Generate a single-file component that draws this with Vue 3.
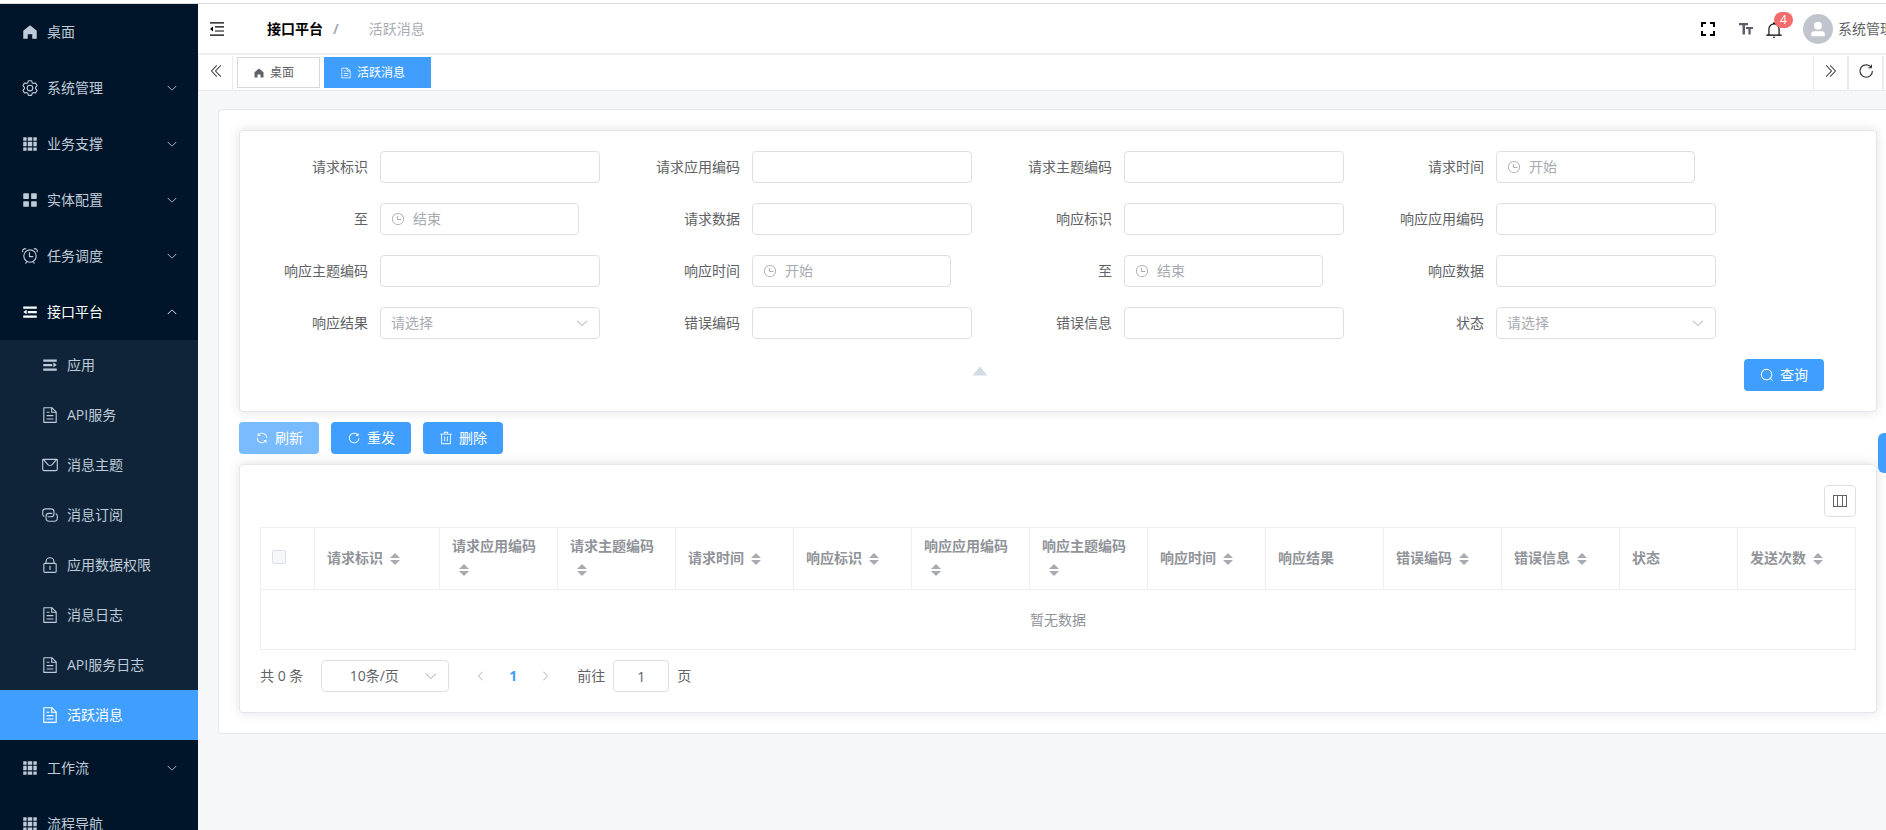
<script setup>
import { h, ref } from 'vue'

const paths = {
  home: 'M512 128 128 447.936V896h255.936V640H640v256h255.936V447.936z',
  grid: 'M640 384v256H384V384h256zm64 0h192v256H704V384zm-64 512H384V704h256v192zm64 0V704h192v192H704zm-64-768v192H384V128h256zm64 0h192v192H704V128zM320 384v256H128V384h192zm0 512H128V704h192v192zm0-768v192H128V128h192z',
  menu: 'M160 448a32 32 0 0 1-32-32V160.064a32 32 0 0 1 32-32h256a32 32 0 0 1 32 32V416a32 32 0 0 1-32 32H160zm448 0a32 32 0 0 1-32-32V160.064a32 32 0 0 1 32-32h255.936a32 32 0 0 1 32 32V416a32 32 0 0 1-32 32H608zM160 896a32 32 0 0 1-32-32V608a32 32 0 0 1 32-32h256a32 32 0 0 1 32 32v256a32 32 0 0 1-32 32H160zm448 0a32 32 0 0 1-32-32V608a32 32 0 0 1 32-32h255.936a32 32 0 0 1 32 32v256a32 32 0 0 1-32 32H608z',
  setting: 'M600.704 64a32 32 0 0 1 30.464 22.208l35.2 109.376c14.784 7.232 28.928 15.36 42.432 24.512l112.384-24.192a32 32 0 0 1 34.432 15.36L944.32 364.8a32 32 0 0 1-4.032 37.504l-77.12 85.12a357.12 357.12 0 0 1 0 49.024l77.12 85.248a32 32 0 0 1 4.032 37.504l-88.704 153.6a32 32 0 0 1-34.432 15.296L708.8 803.904c-13.44 9.088-27.648 17.28-42.368 24.512l-35.264 109.376A32 32 0 0 1 600.704 960H423.296a32 32 0 0 1-30.464-22.208L357.696 828.48a351.616 351.616 0 0 1-42.56-24.64l-112.32 24.256a32 32 0 0 1-34.432-15.36L79.68 659.2a32 32 0 0 1 4.032-37.504l77.12-85.248a357.12 357.12 0 0 1 0-48.896l-77.12-85.248A32 32 0 0 1 79.68 364.8l88.704-153.6a32 32 0 0 1 34.432-15.296l112.32 24.256c13.568-9.152 27.776-17.408 42.56-24.64l35.2-109.312A32 32 0 0 1 423.232 64H600.64zm-23.424 64H446.72l-36.352 113.088-24.512 11.968a294.113 294.113 0 0 0-34.816 20.096l-22.656 15.36-116.224-25.088-65.28 113.152 79.68 88.192-1.92 27.136a293.12 293.12 0 0 0 0 40.192l1.92 27.136-79.808 88.192 65.344 113.152 116.224-25.024 22.656 15.296a294.113 294.113 0 0 0 34.816 20.096l24.512 11.968L446.72 896h130.688l36.48-113.152 24.448-11.904a288.282 288.282 0 0 0 34.752-20.096l22.592-15.296 116.288 25.024 65.28-113.152-79.744-88.192 1.92-27.136a293.12 293.12 0 0 0 0-40.256l-1.92-27.136 79.808-88.128-65.344-113.152-116.288 24.96-22.592-15.232a287.616 287.616 0 0 0-34.752-20.096l-24.448-11.904L577.344 128zM512 320a192 192 0 1 1 0 384 192 192 0 0 1 0-384zm0 64a128 128 0 1 0 0 256 128 128 0 0 0 0-256z',
  alarm: 'M512 832a320 320 0 1 0 0-640 320 320 0 0 0 0 640zm0 64a384 384 0 1 1 0-768 384 384 0 0 1 0 768zM292.288 824.576l55.424 32-48 83.136a32 32 0 1 1-55.424-32l48-83.136zm439.424 0-55.424 32 48 83.136a32 32 0 1 0 55.424-32l-48-83.136zM512 512h160a32 32 0 1 1 0 64H480a32 32 0 0 1-32-32V320a32 32 0 0 1 64 0v192zM90.496 312.256A160 160 0 0 1 312.32 90.496l-46.848 46.848a96 96 0 0 0-128 128L90.56 312.256zm835.264 0A160 160 0 0 0 704 90.496l46.848 46.848a96 96 0 0 1 128 128l46.912 46.912z',
  fold: 'M896 192H128v128h768V192zm0 256H384v128h512V448zm0 256H128v128h768V704zM320 384 128 512l192 128V384z',
  expand: 'M128 192h768v128H128V192zm0 256h512v128H128V448zm0 256h768v128H128V704zm576-352 192 160-192 128V352z',
  document: 'M832 384H576V128H192v768h640V384zm-26.496-64L640 154.496V320h165.504zM160 64h480l256 256v608a32 32 0 0 1-32 32H160a32 32 0 0 1-32-32V96a32 32 0 0 1 32-32zm160 448h384v64H320v-64zm0-192h160v64H320v-64zm0 384h384v64H320v-64z',
  message: 'M128 224v512a64 64 0 0 0 64 64h640a64 64 0 0 0 64-64V224H128zm0-64h768a64 64 0 0 1 64 64v512a128 128 0 0 1-128 128H192A128 128 0 0 1 64 736V224a64 64 0 0 1 64-64zM904 224 656.512 506.88a192 192 0 0 1-289.024 0L120 224h784zm-698.944 0 210.56 240.704a128 128 0 0 0 192.704 0L818.944 224H205.056z',
  connection: 'M640 384v64H448a128 128 0 0 0-128 128v128a128 128 0 0 0 128 128h320a128 128 0 0 0 128-128V576a128 128 0 0 0-64-110.848V394.88c74.56 26.368 128 97.472 128 181.056v128a192 192 0 0 1-192 192H448a192 192 0 0 1-192-192V576a192 192 0 0 1 192-192h192zM384 640v-64h192a128 128 0 0 0 128-128V320a128 128 0 0 0-128-128H256a128 128 0 0 0-128 128v128a128 128 0 0 0 64 110.848v70.272A192.064 192.064 0 0 1 64 448V320a192 192 0 0 1 192-192h320a192 192 0 0 1 192 192v128a192 192 0 0 1-192 192H384z',
  lock: 'M224 448a32 32 0 0 0-32 32v384a32 32 0 0 0 32 32h576a32 32 0 0 0 32-32V480a32 32 0 0 0-32-32H224zm0-64h576a96 96 0 0 1 96 96v384a96 96 0 0 1-96 96H224a96 96 0 0 1-96-96V480a96 96 0 0 1 96-96zM512 544a32 32 0 0 1 32 32v192a32 32 0 1 1-64 0V576a32 32 0 0 1 32-32zm192-160v-64a192 192 0 1 0-384 0v64h384zM512 64a256 256 0 0 1 256 256v128H256V320A256 256 0 0 1 512 64z',
  arrowDown: 'M831.872 340.864 512 652.672 192.128 340.864a30.592 30.592 0 0 0-42.752 0 29.12 29.12 0 0 0 0 41.6L489.664 714.24a32 32 0 0 0 44.672 0l340.288-331.712a29.12 29.12 0 0 0 0-41.728 30.592 30.592 0 0 0-42.752 0z',
  arrowLeft: 'M609.408 149.376 277.76 489.6a32 32 0 0 0 0 44.672l331.648 340.352a29.12 29.12 0 0 0 41.728 0 30.592 30.592 0 0 0 0-42.752L339.264 511.936l311.872-319.872a30.592 30.592 0 0 0 0-42.688 29.12 29.12 0 0 0-41.728 0z',
  doubleLeft: 'M529.408 149.376a29.12 29.12 0 0 1 41.728 0 30.592 30.592 0 0 1 0 42.688L259.264 511.936l311.872 319.936a30.592 30.592 0 0 1-.512 43.264 29.12 29.12 0 0 1-41.216-.512L197.76 534.272a32 32 0 0 1 0-44.672l331.648-340.224zm256 0a29.12 29.12 0 0 1 41.728 0 30.592 30.592 0 0 1 0 42.688L515.264 511.936l311.872 319.936a30.592 30.592 0 0 1-.512 43.264 29.12 29.12 0 0 1-41.216-.512L453.76 534.272a32 32 0 0 1 0-44.672l331.648-340.224z',
  refreshRight: 'M784.512 230.272v-50.56a32 32 0 1 1 64 0v149.056a32 32 0 0 1-32 32H667.52a32 32 0 1 1 0-64h92.992A320 320 0 1 0 524.8 833.152a320 320 0 0 0 320-320h64a384 384 0 0 1-384 384 384 384 0 0 1-384-384 384 384 0 0 1 643.712-282.88z',
  refresh: 'M771.776 794.88A384 384 0 0 1 128 512h64a320 320 0 0 0 555.712 216.448H654.72a32 32 0 1 1 0-64h149.056a32 32 0 0 1 32 32v148.928a32 32 0 1 1-64 0v-50.56zM276.288 295.616h92.992a32 32 0 0 1 0 64H220.16a32 32 0 0 1-32-32V178.56a32 32 0 0 1 64 0v50.56A384 384 0 0 1 896.128 512h-64a320 320 0 0 0-555.776-216.384z',
  trash: 'M160 256H96a32 32 0 0 1 0-64h256V95.936a32 32 0 0 1 32-32h256a32 32 0 0 1 32 32V192h256a32 32 0 1 1 0 64h-64v672a32 32 0 0 1-32 32H192a32 32 0 0 1-32-32V256zm448-64v-64H416v64h192zM224 896h576V256H224v640zm192-128a32 32 0 0 1-32-32V416a32 32 0 0 1 64 0v320a32 32 0 0 1-32 32zm192 0a32 32 0 0 1-32-32V416a32 32 0 0 1 64 0v320a32 32 0 0 1-32 32z',
  search: 'm795.904 750.72 124.992 124.928a32 32 0 0 1-45.248 45.248L750.656 795.904a416 416 0 1 1 45.248-45.248zM480 832a352 352 0 1 0 0-704 352 352 0 0 0 0 704z',
  clock: 'M512 896a384 384 0 1 0 0-768 384 384 0 0 0 0 768zm0 64a448 448 0 1 1 0-896 448 448 0 0 1 0 896zM480 256a32 32 0 0 1 32 32v256a32 32 0 0 1-64 0V288a32 32 0 0 1 32-32zM480 512h256q32 0 32 32t-32 32H480q-32 0-32-32t32-32z',
  bell: 'M512 64a64 64 0 0 1 64 64v64H448v-64a64 64 0 0 1 64-64zM256 768h512V448a256 256 0 1 0-512 0v320zm256-640a320 320 0 0 1 320 320v384H192V448a320 320 0 0 1 320-320zM96 768h832q32 0 32 32t-32 32H96q-32 0-32-32t32-32zm352 128h128a64 64 0 0 1-128 0z',
  user: 'M288 320a224 224 0 1 0 448 0 224 224 0 1 0-448 0zm544 608H160a32 32 0 0 1-32-32v-96a160 160 0 0 1 160-160h448a160 160 0 0 1 160 160v96a32 32 0 0 1-32 32z',
  caretTop: 'M512 320 192 704h639.936z'
}

const Icon = (props) =>
  h('svg', { viewBox: '0 0 1024 1024', fill: 'currentColor', 'aria-hidden': 'true' }, [
    h('path', { d: paths[props.name] })
  ])
Icon.props = ['name']

const menu = [
  { label: '桌面', icon: 'home', leaf: true },
  { label: '系统管理', icon: 'setting' },
  { label: '业务支撑', icon: 'grid' },
  { label: '实体配置', icon: 'menu' },
  { label: '任务调度', icon: 'alarm' },
  {
    label: '接口平台',
    icon: 'fold',
    open: true,
    children: [
      { label: '应用', icon: 'expand' },
      { label: 'API服务', icon: 'document' },
      { label: '消息主题', icon: 'message' },
      { label: '消息订阅', icon: 'connection' },
      { label: '应用数据权限', icon: 'lock' },
      { label: '消息日志', icon: 'document' },
      { label: 'API服务日志', icon: 'document' },
      { label: '活跃消息', icon: 'document', active: true }
    ]
  },
  { label: '工作流', icon: 'grid' },
  { label: '流程导航', icon: 'grid', leaf: true }
]

const fields = [
  { label: '请求标识' },
  { label: '请求应用编码' },
  { label: '请求主题编码' },
  { label: '请求时间', type: 'date', hint: '开始' },
  { label: '至', type: 'date', hint: '结束' },
  { label: '请求数据' },
  { label: '响应标识' },
  { label: '响应应用编码' },
  { label: '响应主题编码' },
  { label: '响应时间', type: 'date', hint: '开始' },
  { label: '至', type: 'date', hint: '结束' },
  { label: '响应数据' },
  { label: '响应结果', type: 'select', hint: '请选择' },
  { label: '错误编码' },
  { label: '错误信息' },
  { label: '状态', type: 'select', hint: '请选择' }
]

const columns = [
  { label: '请求标识', sort: true },
  { label: '请求应用编码', sort: true },
  { label: '请求主题编码', sort: true },
  { label: '请求时间', sort: true },
  { label: '响应标识', sort: true },
  { label: '响应应用编码', sort: true },
  { label: '响应主题编码', sort: true },
  { label: '响应时间', sort: true },
  { label: '响应结果' },
  { label: '错误编码', sort: true },
  { label: '错误信息', sort: true },
  { label: '状态' },
  { label: '发送次数', sort: true }
]

const page = ref('1')
</script>

<template>
  <div class="viewport">
    <div class="app">
      <aside class="sidebar">
        <nav>
          <template v-for="item in menu" :key="item.label">
            <a href="#" class="menu-item" :class="{ opened: item.open }">
              <span class="menu-icon"><Icon :name="item.icon" class="i18" /></span>
              <span class="menu-label">{{ item.label }}</span>
              <Icon v-if="!item.leaf" name="arrowDown" class="i12" :class="{ up: item.open }" />
            </a>
            <div v-if="item.children" class="submenu">
              <a
                v-for="sub in item.children"
                :key="sub.label"
                href="#"
                class="sub-item"
                :class="{ active: sub.active }"
              >
                <span class="menu-icon"><Icon :name="sub.icon" class="i18" /></span>
                <span>{{ sub.label }}</span>
              </a>
            </div>
          </template>
        </nav>
      </aside>

      <div class="main">
        <header class="header">
          <button class="plain fold" aria-label="收起菜单">
            <svg class="i14" viewBox="0 0 14 14" fill="currentColor" aria-hidden="true">
              <path d="M0 .3h14v1.3H0zM5 4.3h9v1.2H5zM5 8.4h9v1.2H5zM0 12.4h14v1.3H0zM3 4.5v5L0 7z" />
            </svg>
          </button>
          <nav class="crumbs">
            <a href="#">接口平台</a>
            <span class="slash">/</span>
            <span class="current">活跃消息</span>
          </nav>
          <div class="tools">
            <button class="plain" aria-label="全屏">
              <svg class="i14" viewBox="0 0 14 14" fill="none" stroke="#000" stroke-width="2" aria-hidden="true">
                <path d="M1 5V1h4M9 1h4v4M13 9v4H9M5 13H1V9" />
              </svg>
            </button>
            <button class="plain text-size" aria-label="字号">
              <svg class="i14" viewBox="0 0 14 14" fill="#5a5e66" aria-hidden="true">
                <path d="M0 1h9v2.2H6v9.3H3.5V3.2H0zM7 5h7v2h-2.3v5.5H9.4V7H7z" />
              </svg>
            </button>
            <button class="plain bell" aria-label="通知">
              <Icon name="bell" class="i18" />
              <span class="badge">4</span>
            </button>
            <span class="avatar"><Icon name="user" class="i18" /></span>
            <span class="user">系统管理员</span>
          </div>
        </header>

        <div class="tabs">
          <button class="plain scroll left" aria-label="向左"><Icon name="doubleLeft" class="i16" /></button>
          <a href="#" class="tab"><Icon name="home" class="i12" />桌面</a>
          <a href="#" class="tab on"><Icon name="document" class="i12" />活跃消息</a>
          <div class="tabs-end">
            <button class="plain scroll" aria-label="向右"><Icon name="doubleLeft" class="i16 flip" /></button>
            <button class="plain scroll" aria-label="刷新页面"><Icon name="refreshRight" class="i18" /></button>
          </div>
        </div>

        <main class="content">
          <div class="panel">
            <form class="card" @submit.prevent>
              <div class="fields">
                <div v-for="(f, i) in fields" :key="i" class="field">
                  <label :for="'f' + i">{{ f.label }}</label>
                  <span v-if="f.type === 'date'" class="box date">
                    <Icon name="clock" class="i14" />
                    <input :id="'f' + i" type="text" :placeholder="f.hint" />
                  </span>
                  <span v-else-if="f.type === 'select'" class="box">
                    <select :id="'f' + i">
                      <option>{{ f.hint }}</option>
                    </select>
                    <Icon name="arrowDown" class="i14" />
                  </span>
                  <span v-else class="box"><input :id="'f' + i" type="text" /></span>
                </div>
              </div>
              <div class="search-row">
                <button type="button" class="plain collapse" aria-label="收起">
                  <Icon name="caretTop" class="i24" />
                </button>
                <button class="btn"><Icon name="search" class="i14" />查询</button>
              </div>
            </form>

            <div class="actions">
              <button class="btn light"><Icon name="refresh" class="i14" />刷新</button>
              <button class="btn"><Icon name="refreshRight" class="i14" />重发</button>
              <button class="btn"><Icon name="trash" class="i14" />删除</button>
            </div>

            <section class="card">
              <div class="table-tools">
                <button class="columns-btn" aria-label="列设置">
                  <svg class="i14" viewBox="0 0 14 14" fill="none" stroke="currentColor" aria-hidden="true">
                    <path d="M0 1.5h14M0 12.5h14M.5 1v12M4.5 2v10M9.5 2v10M13.5 1v12" />
                  </svg>
                </button>
              </div>
              <table>
                <colgroup>
                  <col class="col-check" />
                  <col class="col-first" />
                  <col v-for="n in 12" :key="n" />
                </colgroup>
                <thead>
                  <tr>
                    <th><input type="checkbox" class="check" disabled aria-label="全选" /></th>
                    <th v-for="c in columns" :key="c.label">
                      {{ c.label }}<span v-if="c.sort" class="sort"><svg viewBox="0 0 10 12" aria-hidden="true"><path d="M5 0 10 5H0zM0 7h10l-5 5z" /></svg></span>
                    </th>
                  </tr>
                </thead>
                <tbody>
                  <tr><td colspan="14">暂无数据</td></tr>
                </tbody>
              </table>
              <div class="pager">
                <span class="total">共 0 条</span>
                <span class="box size">
                  <select aria-label="每页条数"><option>10条/页</option></select>
                  <Icon name="arrowDown" class="i14" />
                </span>
                <div class="pages">
                  <button class="plain" aria-label="上一页"><Icon name="arrowLeft" class="i12" /></button>
                  <button class="plain num">1</button>
                  <button class="plain" aria-label="下一页"><Icon name="arrowLeft" class="i12 flip" /></button>
                </div>
                <label for="goto">前往</label>
                <span class="box goto"><input id="goto" v-model="page" type="text" /></span>
                <span>页</span>
              </div>
            </section>
          </div>
        </main>
      </div>
    </div>
    <button class="drawer-handle" aria-label="打开设置"></button>
  </div>
</template>

<style>
body {
  margin: 0;
}
</style>

<style scoped>
.viewport {
  height: 100vh;
  overflow: hidden;
  box-sizing: border-box;
  padding-top: 3px;
  background: #fff;
  color: #606266;
  font: 14px/20px 'Open Sans', 'Noto Sans CJK SC', sans-serif;
}
.viewport *,
.viewport *::before {
  box-sizing: border-box;
}
/* The layout runs past the right edge of the window. */
.app {
  display: flex;
  width: calc(100% + 32px);
  height: 100%;
  border-top: 1px solid #dcdcdc;
}
a {
  color: inherit;
  text-decoration: none;
}
button,
input,
select {
  font: inherit;
  color: inherit;
}
svg {
  display: block;
  flex: none;
}
.i12 { width: 12px; height: 12px; }
.i14 { width: 14px; height: 14px; }
.i16 { width: 16px; height: 16px; }
.i18 { width: 18px; height: 18px; }
.i24 { width: 24px; height: 24px; }
.up { transform: rotate(180deg); }
.flip { transform: scaleX(-1); }
.plain {
  display: flex;
  align-items: center;
  justify-content: center;
  padding: 0;
  border: 0;
  background: none;
  cursor: pointer;
}

.sidebar {
  flex: none;
  width: 198px;
  overflow: hidden;
  background: #001529;
  color: #bfcbd9;
}
.menu-item,
.sub-item {
  display: flex;
  align-items: center;
  gap: 5px;
}
.menu-item {
  height: 56px;
  padding: 0 20px 0 18px;
}
.menu-item.opened {
  color: #fff;
}
.menu-label {
  flex: 1;
}
.menu-icon {
  display: flex;
  justify-content: center;
  width: 24px;
}
.submenu {
  background: #0f2438;
}
.sub-item {
  height: 50px;
  padding: 0 20px 0 38px;
}
.sub-item.active {
  background: #409eff;
  color: #fff;
}

.main {
  flex: 1;
  min-width: 0;
  background: #f5f7f9;
}
.header {
  display: flex;
  align-items: center;
  height: 51px;
  padding: 0 10px 0 12px;
  border-bottom: 2px solid #eee;
  background: #fff;
}
.fold {
  color: #000;
}
.crumbs {
  display: flex;
  margin-left: 43px;
  color: #000;
  font-weight: 700;
}
.slash {
  margin: 0 30px 0 10px;
  color: #a8abb2;
}
.current {
  color: #a8abb2;
  font-weight: 400;
}
.tools {
  display: flex;
  align-items: center;
  margin-left: auto;
}
.text-size {
  margin: 0 12px 0 24px;
}
.bell {
  position: relative;
  margin-top: 2px;
  color: #000;
}
.badge {
  position: absolute;
  top: -9px;
  right: -10px;
  width: 19px;
  height: 16px;
  border-radius: 8px;
  background: #f56c6c;
  color: #fff;
  font-size: 12px;
  line-height: 16px;
  text-align: center;
}
.avatar {
  display: flex;
  align-items: center;
  justify-content: center;
  width: 30px;
  height: 30px;
  margin: 0 5px 0 20px;
  border-radius: 50%;
  background: #c0c4cc;
  color: #fff;
}

.tabs {
  display: flex;
  align-items: center;
  height: 36px;
  border-bottom: 1px solid #ebebeb;
  background: #fff;
  font-size: 12px;
}
.scroll {
  width: 35px;
  height: 34px;
  padding-bottom: 4px;
  color: #303133;
}
.scroll.left {
  margin-right: 4px;
  border-right: 1px solid #ebebeb;
  border-left: 1px solid #ebebeb;
}
.tab {
  display: flex;
  align-items: center;
  gap: 5px;
  height: 31px;
  margin-right: 4px;
  padding: 0 25px 0 15px;
  border: 1px solid #d8d8d8;
  color: #606266;
}
.tab.on {
  border-color: #409eff;
  background: #409eff;
  color: #fff;
}
.tabs-end {
  display: flex;
  margin-left: auto;
  margin-right: 34px;
  border-left: 1px solid #ebebeb;
}
.tabs-end .scroll {
  border-right: 2px solid #ebebeb;
}

.content {
  padding: 18px 20px 20px;
}
.panel {
  padding: 20px;
  border: 1px solid #e4e7ed;
  border-radius: 4px;
  background: #fff;
}
.card {
  padding: 20px;
  border: 1px solid #e4e7ed;
  border-radius: 4px;
  background: #fff;
  box-shadow: 0 0 12px rgba(0, 0, 0, 0.12);
}
.fields {
  display: grid;
  grid-template-columns: repeat(auto-fill, 340px);
  gap: 20px 32px;
}
.field {
  display: grid;
  grid-template-columns: 120px 220px;
  align-items: center;
}
.field label {
  padding-right: 12px;
  text-align: right;
}
.box {
  display: flex;
  align-items: center;
  position: relative;
  height: 32px;
  padding: 0 10px;
  border: 1px solid #dcdfe6;
  border-radius: 4px;
  background: #fff;
  color: #a8abb2;
}
.box.date {
  gap: 8px;
  width: 199px;
}
.box input,
.box select {
  flex: 1;
  width: 100%;
  min-width: 0;
  height: 30px;
  padding: 0;
  border: 0;
  outline: 0;
  background: none;
  appearance: none;
}
.box.date input {
  padding-bottom: 2px;
}
.box input::placeholder {
  color: #a8abb2;
  opacity: 1;
}
.search-row {
  display: flex;
  margin-top: 20px;
  padding-right: 32px;
}
.collapse {
  flex: 1;
  align-items: flex-start;
  margin-right: 44px;
  color: #d3dce6;
}
.btn {
  display: flex;
  align-items: center;
  justify-content: center;
  gap: 6px;
  width: 80px;
  height: 32px;
  padding: 0;
  border: 0;
  border-radius: 4px;
  background: #409eff;
  color: #fff;
  cursor: pointer;
}
.btn.light {
  background: #79bbff;
}
.actions {
  display: flex;
  gap: 12px;
  padding: 10px 0;
}
.table-tools {
  display: flex;
  justify-content: flex-end;
  margin-bottom: 10px;
}
.columns-btn {
  display: flex;
  align-items: center;
  justify-content: center;
  width: 32px;
  height: 32px;
  padding: 0;
  border: 1px solid #dcdfe6;
  border-radius: 4px;
  background: #fff;
}

table {
  width: 100%;
  table-layout: fixed;
  border-spacing: 0;
  border-top: 1px solid #ebeef5;
  color: #909399;
  line-height: 23px;
}
.col-check {
  width: 55px;
}
.col-first {
  width: 125px;
}
th,
td {
  border-right: 1px solid #ebeef5;
  border-bottom: 1px solid #ebeef5;
}
th:first-child,
td:first-child {
  border-left: 1px solid #ebeef5;
}
th {
  height: 62px;
  padding: 5px 12px 8px;
  text-align: left;
}
th:first-child {
  padding: 0 11px 3px;
}
td {
  height: 60px;
  padding: 0;
  text-align: center;
}
.check {
  display: block;
  width: 14px;
  height: 14px;
  margin: 0;
  border: 1px solid #dcdfe6;
  border-radius: 2px;
  background: #f5f7fa;
  appearance: none;
}
.sort {
  display: inline-flex;
  justify-content: center;
  width: 24px;
  vertical-align: middle;
}
.sort svg {
  width: 10px;
  height: 12px;
  fill: #a8abb2;
}

.pager {
  display: flex;
  align-items: center;
  margin-top: 10px;
}
.size {
  gap: 8px;
  width: 128px;
  margin: 0 16px 0 18px;
}
.size select {
  color: #606266;
  text-align: center;
  text-align-last: center;
}
.pages {
  display: flex;
  margin-right: 16px;
  color: #a8abb2;
}
.pages button {
  width: 32px;
  height: 32px;
}
.pages .num {
  color: #409eff;
  font-weight: 700;
}
.goto {
  width: 56px;
  margin: 0 8px;
}
.goto input {
  color: #606266;
  text-align: center;
}
.drawer-handle {
  position: fixed;
  top: 433px;
  right: 0;
  width: 8px;
  height: 40px;
  padding: 0;
  border: 0;
  border-radius: 6px 0 0 6px;
  background: #409eff;
}
</style>
